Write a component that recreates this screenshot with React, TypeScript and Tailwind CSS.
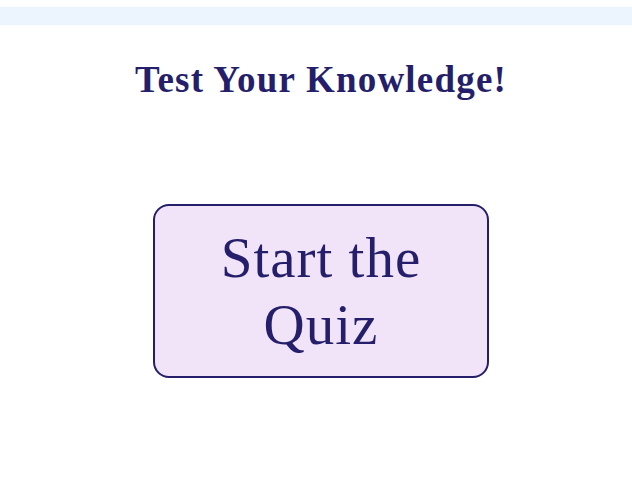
import React from 'react';

// quiz landing screen: heading plus one big start button

export default function App() {
  return (
    <div className="min-h-screen bg-white pt-[7px] font-['Liberation_Serif',serif] text-[#251f6b]">
      <div className="h-[18px] bg-[#ecf5fe]" />
      <div className="pl-[10px]">
        <h1 className="mt-[31px] text-center text-[37px] font-bold leading-[48px] tracking-[1.2px]">
          Test Your Knowledge!
        </h1>
        <div className="mt-[100px] flex justify-center">
          <button className="w-[336px] h-[174px] rounded-[16px] border-2 border-[#251f6b] bg-[#f1e4f8] px-6 text-[57px] leading-[67px] tracking-[1px] text-[#251f6b]">
            Start the Quiz
          </button>
        </div>
      </div>
    </div>
  );
}
